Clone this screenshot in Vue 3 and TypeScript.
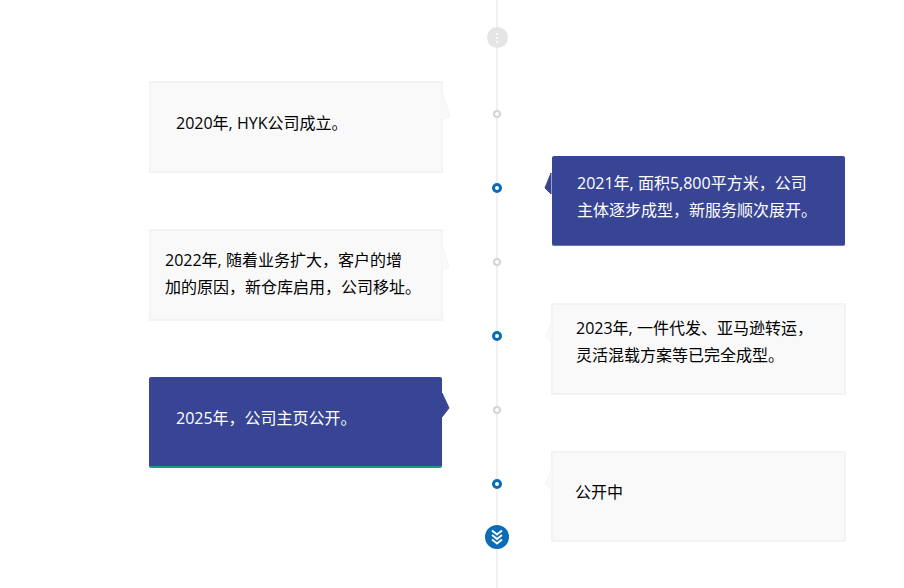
<script setup lang="ts">
interface Item {
  lines: string[];
  side: "left" | "right";
  blue: boolean;
  pad: number;
  top: number;
  points: string;
  arrowTop: number;
  height: number;
}
const items: Item[] = [
  { lines: ["2020年, HYK公司成立。"], side: "left", blue: false, pad: 25, top: 27, points: "0,0 9,30 0,33", arrowTop: 4, height: 92 },
  { lines: ["2021年, 面积5,800平方米，公司", "主体逐步成型，新服务顺次展开。"], side: "right", blue: true, pad: 25, top: 14, points: "8,0 2,15 8,21", arrowTop: 17, height: 90 },
  { lines: ["2022年, 随着业务扩大，客户的增", "加的原因，新仓库启用，公司移址。"], side: "left", blue: false, pad: 14, top: 16, points: "0,0 8,25 0,28", arrowTop: 11, height: 92 },
  { lines: ["2023年, 一件代发、亚马逊转运，", "灵活混载方案等已完全成型。"], side: "right", blue: false, pad: 23, top: 10, points: "8,0 2,16 8,22", arrowTop: 15, height: 92 },
  { lines: ["2025年，公司主页公开。"], side: "left", blue: true, pad: 27, top: 28, points: "0,0 7,15 0,24", arrowTop: 16, height: 91 },
  { lines: ["公开中"], side: "right", blue: false, pad: 22, top: 26, points: "8,0 2,16 8,22", arrowTop: 15, height: 91 },
];
</script>

<template>
  <div class="page">
    <div class="rail"></div>
    <div class="end-row">
      <div class="cap cap-grey"><span></span><span></span><span></span></div>
    </div>
    <div class="timeline">
      <template v-for="(item, i) in items" :key="i">
        <div class="slot" :class="item.side" :style="{ gridRow: `${i + 1} / span 2` }">
          <div class="card" :class="[item.side, { blue: item.blue }]" :style="{ height: item.height + 'px' }">
            <svg class="arrow" :style="{ top: item.arrowTop + 'px' }" width="9" height="34" viewBox="0 0 9 34">
              <polygon class="fill" :points="item.points" />
            </svg>
            <div class="text" :style="{ paddingLeft: item.pad + 'px', paddingTop: item.top + 'px' }">
              <p v-for="line in item.lines" :key="line">{{ line }}</p>
            </div>
          </div>
        </div>
        <div class="node-cell" :style="{ gridRow: `${i + 1}` }">
          <div class="dot" :class="{ active: i % 2 === 1 }"></div>
        </div>
      </template>
      <div class="tail-cell">
        <div class="cap cap-blue">
          <svg width="14" height="16" viewBox="0 0 14 16" fill="none" stroke="#fff" stroke-width="1.9">
            <path d="M2 1.5l5 4 5-4M2 6l5 4 5-4M2 10.5l5 4 5-4" />
          </svg>
        </div>
      </div>
    </div>
  </div>
</template>

<style>
html, body { margin: 0; background: #fff; }
</style>

<style scoped>
.page {
  position: relative;
  width: 904px;
  height: 588px;
  overflow: hidden;
  font-family: "Open Sans", "Noto Sans CJK SC", sans-serif;
  font-size: 16px;
  color: #000;
}
.rail {
  position: absolute;
  left: 496px;
  top: 0;
  bottom: 0;
  width: 2px;
  background: #f0f0f0;
}
.end-row {
  position: relative;
  display: flex;
  justify-content: center;
  width: 994px;
  height: 81px;
  padding-top: 27px;
  box-sizing: border-box;
}
.cap {
  border-radius: 50%;
  display: flex;
  align-items: center;
  justify-content: center;
}
.cap-grey {
  width: 21px;
  height: 21px;
  background: #e5e5e5;
  flex-direction: column;
  gap: 2px;
}
.cap-grey span {
  width: 2px;
  height: 2px;
  border-radius: 50%;
  background: #fff;
}
.cap-blue {
  width: 24px;
  height: 24px;
  background: #0b6cb5;
}
.timeline {
  position: relative;
  display: grid;
  grid-template-columns: 293px 110px 293px;
  grid-auto-rows: 74px;
  margin-left: 149px;
  width: 696px;
}
.slot { min-width: 0; }
.slot.left { grid-column: 1; }
.slot.right { grid-column: 3; }
.card {
  position: relative;
  box-sizing: border-box;
  background: #f9f9f9;
  border: 2px solid #f3f3f3;
}
.card.left { width: 294px; }
.card.right { width: 295px; margin-left: -1px; }
.card.blue {
  width: 293px;
  margin-left: 0;
  background: #384594;
  border: 0;
  border-radius: 2px;
  color: #fff;
}
.card.blue.left { border-bottom: 2px solid #1c9c6e; }
.card.blue.right { border-bottom: 1px solid #3f8fa8; margin-top: 1px; }
.arrow { position: absolute; }
.arrow .fill { fill: #f9f9f9; stroke: #f3f3f3; stroke-width: 1; }
.blue .arrow .fill { fill: #384594; stroke: #384594; }
.card.left .arrow { left: 100%; }
.card.right .arrow { right: 100%; }
.text p {
  margin: 0;
  line-height: 27px;
  white-space: nowrap;
}
.node-cell {
  grid-column: 2;
  display: flex;
  justify-content: center;
  padding-top: 28px;
  box-sizing: border-box;
}
.tail-cell {
  grid-column: 2;
  grid-row: 7;
  display: flex;
  justify-content: center;
  align-items: flex-start;
}
.dot {
  width: 8px;
  height: 8px;
  border-radius: 50%;
  background: #fff;
  outline: 2px solid #d4d4d4;
  outline-offset: -2px;
  margin-top: 1px;
}
.dot.active {
  width: 10px;
  height: 10px;
  outline: 3px solid #0b6cb5;
  outline-offset: -3px;
  margin-top: 0;
}
</style>
